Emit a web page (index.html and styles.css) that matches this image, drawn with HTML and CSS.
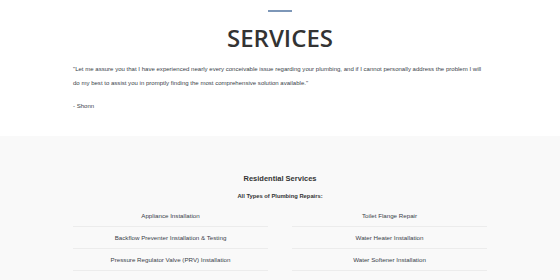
FILE: index.html
```html
<!DOCTYPE html>
<html lang="en">
<head>
  <meta charset="UTF-8" />
  <meta name="viewport" content="width=device-width, initial-scale=1.0"/>
  <title>Services</title>
  <link rel="stylesheet" href="styles.css">
</head>
<body>

<section class="intro">
  <div class="rule"></div>
  <h1 class="title">SERVICES</h1>
  <div class="wrap">
    <p class="quote">"Let me assure you that I have experienced nearly every conceivable issue regarding your plumbing, and if I cannot personally address the problem I will do my best to assist you in promptly finding the most comprehensive solution available."</p>
    <p class="sign">- Shonn</p>
  </div>
</section>

<section class="services">
  <h2 class="services-title">Residential Services</h2>
  <h3 class="services-sub">All Types of Plumbing Repairs:</h3>
  <div class="wrap lists">
    <ul class="list">
      <li>Appliance Installation</li>
      <li>Backflow Preventer Installation &amp; Testing</li>
      <li>Pressure Regulator Valve (PRV) Installation</li>
      <li>Bidet Installation</li>
    </ul>
    <ul class="list">
      <li>Toilet Flange Repair</li>
      <li>Water Heater Installation</li>
      <li>Water Softener Installation</li>
      <li>Water Line Repair</li>
    </ul>
  </div>
</section>

</body>
</html>
```

FILE: styles.css
```css
body {
  margin: 0;
  font-family: 'Liberation Sans', Arial, sans-serif;
  color: #333;
  background: #fff;
  overflow: hidden;
  height: 280px;
}

.intro {
  padding-top: 10px;
  height: 126px;
}

.rule {
  width: 24px;
  height: 2px;
  margin: 0 auto;
  background: #7d97b8;
}

.title {
  margin: 12px 0 0;
  text-align: center;
  font-family: 'Open Sans', sans-serif;
  font-size: 24px;
  font-weight: 600;
  line-height: 28px;
  color: #333;
}

.wrap {
  width: 414px;
  margin: 0 auto;
}

.quote {
  margin: 10px 0 0;
  font-size: 6.05px;
  line-height: 14px;
  color: #3a3f4a;
}

.sign {
  margin: 9px 0 0;
  font-size: 6.05px;
  line-height: 14px;
  color: #3a3f4a;
}

.services {
  background: #f9f9f9;
  padding-top: 36px;
  height: 200px;
}

.services-title {
  margin: 0;
  text-align: center;
  font-size: 7.5px;
  font-weight: 700;
  line-height: 14px;
  color: #333;
}

.services-sub {
  margin: 3px 0 0;
  text-align: center;
  font-size: 5.8px;
  font-weight: 700;
  line-height: 14px;
  color: #333;
}

.lists {
  display: grid;
  grid-template-columns: 1fr 1fr;
  gap: 24px;
  margin-top: 2px;
}

.list {
  list-style: none;
  margin: 0;
  padding: 0;
}

.list li {
  text-align: center;
  font-size: 6.2px;
  line-height: 21px;
  color: #3a3f4a;
  border-bottom: 1px solid #ececec;
}
```
